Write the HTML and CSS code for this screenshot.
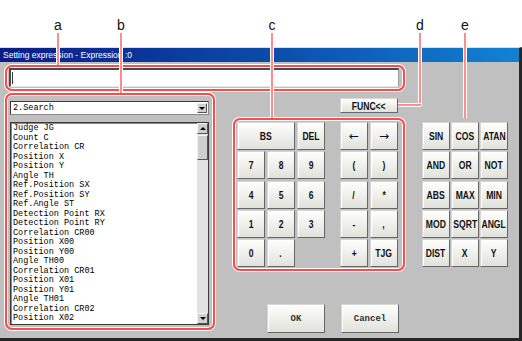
FILE: index.html
```html
<!DOCTYPE html>
<html lang="en">
<head>
    <meta charset="UTF-8">
    <title>Setting expression</title>
    <link rel="stylesheet" href="styles.css">
</head>
<body>
<div class="page">
    <div class="dialog">
        <div class="titlebar">Setting expression - Expression :0</div>
        <div class="dialog-body">
            <!-- expression input -->
            <div class="frame frame-input">
                <div class="expr-input"><span class="caret"></span></div>
            </div>

            <div class="main-row">
                <!-- reference list -->
                <div class="frame frame-list">
                    <div class="combo">
                        <span class="combo-text">2.Search</span>
                        <span class="mini-btn combo-btn"><span class="tri-down"></span></span>
                    </div>
                    <div class="listbox">
                        <ul class="items">
                            <li>Judge JG</li>
                            <li>Count C</li>
                            <li>Correlation CR</li>
                            <li>Position X</li>
                            <li>Position Y</li>
                            <li>Angle TH</li>
                            <li>Ref.Position SX</li>
                            <li>Ref.Position SY</li>
                            <li>Ref.Angle ST</li>
                            <li>Detection Point RX</li>
                            <li>Detection Point RY</li>
                            <li>Correlation CR00</li>
                            <li>Position X00</li>
                            <li>Position Y00</li>
                            <li>Angle TH00</li>
                            <li>Correlation CR01</li>
                            <li>Position X01</li>
                            <li>Position Y01</li>
                            <li>Angle TH01</li>
                            <li>Correlation CR02</li>
                            <li>Position X02</li>
                        </ul>
                        <div class="scrollbar">
                            <span class="mini-btn sb-btn"><span class="tri-up"></span></span>
                            <span class="sb-thumb"></span>
                            <span class="sb-track"></span>
                            <span class="mini-btn sb-btn"><span class="tri-down"></span></span>
                        </div>
                    </div>
                </div>

                <!-- keypad -->
                <div class="center-col">
                    <div class="func-row">
                        <button class="btn btn-func"><span>FUNC&lt;&lt;</span></button>
                    </div>
                    <div class="frame frame-keys">
                        <div class="keys keys-num">
                            <button class="btn key wide"><span>BS</span></button>
                            <button class="btn key"><span>DEL</span></button>
                            <button class="btn key"><span>7</span></button>
                            <button class="btn key"><span>8</span></button>
                            <button class="btn key"><span>9</span></button>
                            <button class="btn key"><span>4</span></button>
                            <button class="btn key"><span>5</span></button>
                            <button class="btn key"><span>6</span></button>
                            <button class="btn key"><span>1</span></button>
                            <button class="btn key"><span>2</span></button>
                            <button class="btn key"><span>3</span></button>
                            <button class="btn key"><span>0</span></button>
                            <button class="btn key"><span>.</span></button>
                        </div>
                        <div class="keys keys-op">
                            <button class="btn key arrow">&larr;</button>
                            <button class="btn key arrow">&rarr;</button>
                            <button class="btn key"><span>(</span></button>
                            <button class="btn key"><span>)</span></button>
                            <button class="btn key"><span>/</span></button>
                            <button class="btn key"><span>*</span></button>
                            <button class="btn key"><span>-</span></button>
                            <button class="btn key"><span>,</span></button>
                            <button class="btn key"><span>+</span></button>
                            <button class="btn key"><span>TJG</span></button>
                        </div>
                    </div>
                    <div class="dialog-buttons">
                        <button class="btn btn-dlg">OK</button>
                        <button class="btn btn-dlg">Cancel</button>
                    </div>
                </div>

                <!-- functions -->
                <div class="keys keys-fn">
                    <button class="btn key"><span>SIN</span></button>
                    <button class="btn key"><span>COS</span></button>
                    <button class="btn key"><span>ATAN</span></button>
                    <button class="btn key"><span>AND</span></button>
                    <button class="btn key"><span>OR</span></button>
                    <button class="btn key"><span>NOT</span></button>
                    <button class="btn key"><span>ABS</span></button>
                    <button class="btn key"><span>MAX</span></button>
                    <button class="btn key"><span>MIN</span></button>
                    <button class="btn key"><span>MOD</span></button>
                    <button class="btn key"><span>SQRT</span></button>
                    <button class="btn key"><span>ANGL</span></button>
                    <button class="btn key"><span>DIST</span></button>
                    <button class="btn key"><span>X</span></button>
                    <button class="btn key"><span>Y</span></button>
                </div>
            </div>
        </div>
    </div>

    <!-- callouts -->
    <div class="callouts">
        <span class="label label-a">a</span>
        <span class="label label-b">b</span>
        <span class="label label-c">c</span>
        <span class="label label-d">d</span>
        <span class="label label-e">e</span>
        <span class="vline line-a"></span>
        <span class="vline line-b"></span>
        <span class="vline line-c"></span>
        <span class="vline line-d"></span>
        <span class="hline line-d2"></span>
        <span class="vline line-e"></span>
    </div>
</div>
</body>
</html>
```

FILE: styles.css
```css
* {
    box-sizing: border-box;
    margin: 0;
    padding: 0;
}
body {
    width: 522px;
    height: 341px;
    overflow: hidden;
    background-color: #fff;
    font-family: "Liberation Sans", Arial, sans-serif;
}
button {
    font: inherit;
    cursor: pointer;
}
.page {
    position: relative;
    height: 341px;
    padding-top: 47px;
}
.dialog {
    height: 294px;
    background-color: #c0c0c0;
    border-top: 1px solid #dedede;
    border-right: 3px solid #262626;
    border-bottom: 3px solid #262626;
}
.titlebar {
    height: 14px;
    line-height: 14px;
    padding-left: 3px;
    font-size: 8.5px;
    color: #fff;
    white-space: nowrap;
    background: linear-gradient(90deg, #0a1c88 0%, #0b4aa8 50%, #1282d2 100%);
}
.dialog-body {
    padding: 3px 0 0 5px;
}
.frame {
    border: 2px solid #ff4a4a;
    border-radius: 7px;
    box-shadow: 0 0 0 1px #fff, inset 0 0 0 1px #fff;
}
.frame-input {
    width: 400px;
    height: 26px;
    padding: 1px 4px 2px 2px;
}
.expr-input {
    height: 19px;
    display: flex;
    align-items: center;
    background-color: #fff;
    border-top: 2px solid #4a4a4a;
    border-left: 2px solid #4a4a4a;
    border-right: 1px solid #9a9a9a;
    border-bottom: 1px solid #e8e8e8;
}
.caret {
    width: 1px;
    height: 12px;
    margin-left: 1px;
    background-color: #333;
}
.main-row {
    display: flex;
    align-items: flex-start;
    margin-top: 2px;
}

/* left list */
.frame-list {
    width: 210px;
    height: 237px;
    padding: 6px 4px 3px 3px;
}
.combo {
    height: 14px;
    display: flex;
    align-items: center;
    justify-content: space-between;
    background-color: #fff;
    border: 1px solid #3a3a3a;
    border-right-color: #8a8a8a;
    border-bottom-color: #8a8a8a;
}
.combo-text,
.items {
    font-family: "Liberation Mono", "DejaVu Sans Mono", monospace;
    font-size: 8.5px;
    color: #000;
}
.combo-text {
    padding-left: 2px;
}
.mini-btn {
    display: flex;
    align-items: center;
    justify-content: center;
    background-color: #cfcfcf;
    border: 1px solid;
    border-color: #f2f2f2 #555 #555 #f2f2f2;
}
.combo-btn {
    width: 10px;
    height: 10px;
    margin-right: 1px;
}
.tri-down,
.tri-up {
    width: 0;
    height: 0;
    border-left: 3px solid transparent;
    border-right: 3px solid transparent;
}
.tri-down {
    border-top: 3px solid #000;
}
.tri-up {
    border-bottom: 3px solid #000;
}
.listbox {
    height: 203px;
    margin-top: 7px;
    display: flex;
    background-color: #fff;
    border: 1px solid #3a3a3a;
    box-shadow: inset 1px 1px 0 #8a8a8a;
}
.items {
    flex: 1;
    list-style: none;
    padding: 1px 0 0 2px;
    line-height: 9.5px;
    overflow: hidden;
    white-space: nowrap;
}
.scrollbar {
    width: 11px;
    display: flex;
    flex-direction: column;
    background-color: #e2e2e2;
}
.sb-btn {
    height: 11px;
}
.sb-thumb {
    height: 25px;
    margin-top: 1px;
    background-color: #cfcfcf;
    border: 1px solid;
    border-color: #f2f2f2 #555 #555 #f2f2f2;
}
.sb-track {
    flex: 1;
}

/* keypad */
.center-col {
    width: 172px;
    margin-left: 18px;
}
.func-row {
    display: flex;
    justify-content: flex-end;
    padding-right: 7px;
    margin-top: 5px;
}
.btn {
    display: flex;
    align-items: center;
    justify-content: center;
    font-family: "Liberation Sans", Arial, sans-serif;
    font-weight: bold;
    font-size: 11px;
    color: #111;
    white-space: nowrap;
    background: linear-gradient(#fefefc, #e2e2dc);
    border: 1px solid;
    border-color: #d6d6d6 #666 #666 #d6d6d6;
    box-shadow: inset 1px 1px 0 #fff;
}
.btn span {
    display: inline-block;
    transform: scaleX(0.78);
}
.btn-func {
    width: 58px;
    height: 15px;
}
.frame-keys {
    display: flex;
    margin-top: 5px;
    padding: 2px 5px 2px 2px;
}
.keys {
    display: grid;
    grid-auto-rows: 28px;
    row-gap: 1.3px;
}
.keys-num {
    grid-template-columns: repeat(3, 28px);
    column-gap: 2px;
}
.keys-op {
    grid-template-columns: repeat(2, 28px);
    column-gap: 2px;
    margin-left: 15px;
}
.keys-fn {
    grid-template-columns: repeat(3, 28px);
    column-gap: 1px;
    margin: 29px 0 0 17px;
}
.key.wide {
    grid-column: span 2;
}
.key.arrow {
    font-family: "DejaVu Sans", sans-serif;
    font-weight: normal;
    font-size: 12px;
}
.dialog-buttons {
    display: flex;
    justify-content: flex-end;
    gap: 16px;
    padding-right: 6px;
    margin-top: 33px;
}
.btn-dlg {
    width: 58px;
    height: 29px;
    font-family: "Liberation Mono", "DejaVu Sans Mono", monospace;
    font-weight: bold;
    font-size: 9px;
    color: #333;
}

/* callouts */
.callouts {
    position: absolute;
    top: 0;
    left: 0;
    width: 100%;
    height: 100%;
    pointer-events: none;
}
.label {
    position: absolute;
    top: 17px;
    width: 20px;
    margin-left: -10px;
    text-align: center;
    font-size: 14px;
    line-height: 16px;
    color: #111;
}
.label-a { left: 58px; }
.label-b { left: 121px; }
.label-c { left: 272px; }
.label-d { left: 420px; }
.label-e { left: 465px; }
.vline,
.hline {
    position: absolute;
    background-color: #ff8c8c;
}
.vline {
    top: 33px;
    width: 2px;
    box-shadow: -1px 0 0 #fff, 1px 0 0 #fff;
}
.hline {
    height: 2px;
    box-shadow: 0 -1px 0 #fff, 0 1px 0 #fff;
}
.line-a { left: 57px; height: 32px; }
.line-b { left: 120px; height: 60px; }
.line-c { left: 271px; height: 85px; }
.line-d { left: 419px; height: 73px; }
.line-d2 { left: 398px; top: 104px; width: 23px; }
.line-e { left: 464px; height: 85px; }
```
